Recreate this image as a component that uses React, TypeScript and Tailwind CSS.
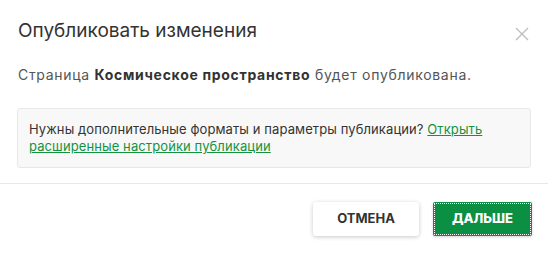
export default function App() {
  return (
    <div className="w-[548px] h-[257px] bg-white font-['Inter',sans-serif] flex flex-col">
      <div className="flex items-start justify-between pl-[18px] pr-[19px] pt-[18px]">
        <h2 className="text-[19px] leading-[26px] text-[#333]">Опубликовать изменения</h2>
        <button aria-label="Закрыть" className="mt-[9px] text-[#bdbdbd]">
          <svg width="14" height="14" viewBox="0 0 14 14" fill="none" stroke="currentColor" strokeWidth="1.3">
            <path d="M1 1L13 13M13 1L1 13" />
          </svg>
        </button>
      </div>
      <p className="pl-[18px] pt-[21px] text-[14px] leading-[20px] tracking-[0.7px] text-[#555]">
        Страница <b className="font-bold text-[#333]">Космическое пространство</b> будет опубликована.
      </p>
      <div className="mx-[17px] mt-[23px] rounded-[3px] border border-[#e8e8e8] bg-[#f8f8f8] px-[11px] py-[12px] text-[13px] leading-[17px] tracking-[0.1px] text-[#333]">
        Нужны дополнительные форматы и параметры публикации?{" "}
        <a href="#" className="text-[#13933f] underline">
          Открыть расширенные настройки публикации
        </a>
      </div>
      <div className="mt-[15px] h-px bg-[#e8e8e8]" />
      <div className="flex justify-end gap-[14px] pr-[16px] pt-[18px]">
        <button className="h-[34px] w-[106px] rounded-[3px] bg-white text-[13px] font-bold text-[#333] shadow-[0_1px_4px_rgba(0,0,0,0.22)]">
          ОТМЕНА
        </button>
        <button className="h-[34px] w-[99px] rounded-[2px] bg-[#0a8f43] p-px shadow-[0_1px_3px_rgba(0,0,0,0.18)]">
          <span className="flex h-full w-full items-center justify-center border border-dotted border-white text-[13px] font-extrabold text-white">
            ДАЛЬШЕ
          </span>
        </button>
      </div>
    </div>
  );
}
